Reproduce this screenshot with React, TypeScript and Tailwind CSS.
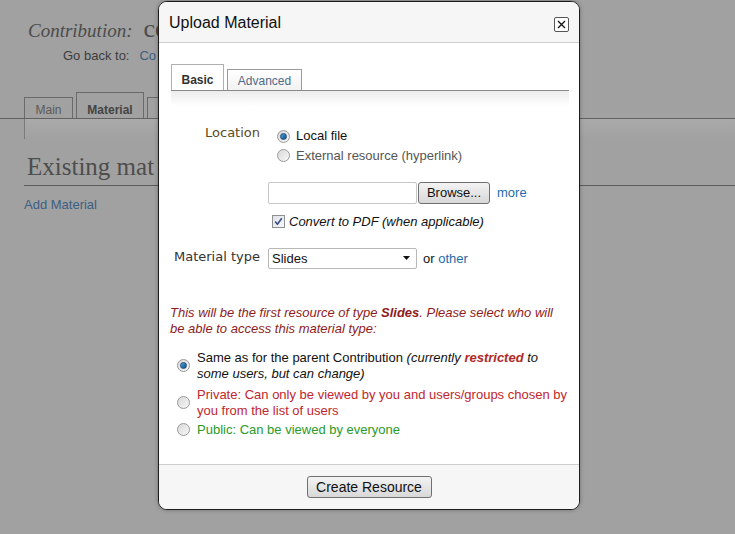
import React from "react";

const Radio = ({ checked }: { checked?: boolean }) => (
  <span className="inline-flex items-center justify-center w-[13px] h-[13px] rounded-full border border-[#9a9a9a] bg-gradient-to-br from-[#d8d8d8] to-[#f8f8f8] shrink-0">
    {checked && (
      <span className="w-[7px] h-[7px] rounded-full bg-gradient-to-br from-[#4aa6e0] to-[#0a4f8a] border border-[#1d4a78]" />
    )}
  </span>
);

export default function App() {
  return (
    <div className="relative w-[735px] h-[534px] overflow-hidden bg-[#a1a1a1] font-['Liberation_Sans',Arial,sans-serif]">
      {/* underlying page */}
      <div className="pt-[18px]">
        <div className="pl-[28px] h-[22px] flex items-baseline gap-[11px] text-[#4c4c4c] font-['Liberation_Serif',serif] leading-[22px]">
          <span className="italic text-[19px]">Contribution:</span>
          <span className="text-[26px]">co</span>
        </div>
        <div className="pl-[63px] mt-[8px] text-[13px] leading-[16px] text-[#3d3d3d] flex gap-[10px]">
          <span>Go back to:</span>
          <span className="text-[#3a5d80]">Co</span>
        </div>
        <div className="mt-[28px] pl-[24px] flex items-end gap-[3px] border-b border-[#626262] h-[27px]">
          <div className="h-[21px] w-[49px] border border-b-0 border-[#6a6a6a] flex items-end justify-center pb-[1px] text-[12px] leading-[14px] text-[#5a5a5a]">
            Main
          </div>
          <div className="h-[26px] w-[68px] border border-b-0 border-[#6a6a6a] flex items-end justify-center pb-[1px] text-[12px] leading-[14px] font-bold text-[#444]">
            Material
          </div>
          <div className="h-[21px] w-[40px] border border-b-0 border-[#6a6a6a]" />
        </div>
        <div className="ml-[24px] h-[20px] border-l border-[#7a7a7a] bg-gradient-to-b from-[#aaaaaa] to-[#a1a1a1]" />
        <div className="ml-[24px] pl-[3px] mt-[12px] pb-[2px] border-b border-[#5c5c5c] font-['Liberation_Serif',serif] text-[25px] text-[#4d4d4d] leading-[32px]">
          Existing mat
        </div>
        <div className="pl-[24px] mt-[11px] text-[13px] leading-[16px] text-[#3d5f84]">Add Material</div>
      </div>

      {/* dialog */}
      <div className="absolute left-[158px] top-[1px] w-[422px] h-[509px] border border-[#1c1c1c] rounded-[9px] bg-white overflow-hidden flex flex-col shadow-[0_0_4px_rgba(0,0,0,0.3)]">
        <div className="h-[41px] shrink-0 bg-[#f6f6f6] border-b border-[#cfcfcf] flex items-center justify-between pl-[10px] pr-[10px]">
          <span className="text-[16px] text-[#111] pt-[1px]">Upload Material</span>
          <span className="w-[15px] h-[15px] mt-[5px] border border-[#555] rounded-[2px] flex items-center justify-center bg-white">
            <svg width="9" height="9" viewBox="0 0 9 9">
              <path d="M1 1L8 8M8 1L1 8" stroke="#111" strokeWidth="1.3" />
            </svg>
          </span>
        </div>

        <div className="flex-1 pl-[12px] pr-[10px] pt-[21px]">
          {/* tabs */}
          <div className="flex items-end gap-[3px] border-b border-[#8a8a8a] h-[27px]">
            <div className="h-[26px] w-[53px] border border-b-0 border-[#b0b0b0] bg-white flex items-center justify-center text-[12px] font-bold text-[#333] pt-[4px]">
              Basic
            </div>
            <div className="h-[21px] w-[75px] border border-b-0 border-[#9a9a9a] bg-gradient-to-b from-white to-[#f2f2f2] flex items-center justify-center text-[12px] text-[#4f6a88] pt-[2px]">
              Advanced
            </div>
          </div>
          <div className="h-[15px] bg-gradient-to-b from-[#ececec] to-white" />

          {/* location */}
          <div className="mt-[19px] flex">
            <div className="w-[89px] text-right font-['DejaVu_Sans',Verdana,sans-serif] text-[13px] text-[#5b4a25] leading-[16px]">
              Location
            </div>
            <div className="ml-[17px] flex flex-col text-[13px]">
              <label className="flex items-center gap-[6px] h-[20px] pt-[2px] text-[#111]">
                <Radio checked />
                <span>Local file</span>
              </label>
              <label className="flex items-center gap-[6px] h-[21px] text-[#555]">
                <Radio />
                <span>External resource (hyperlink)</span>
              </label>
            </div>
          </div>

          {/* file */}
          <div className="mt-[16px] ml-[97px] flex items-center">
            <div className="w-[149px] h-[22px] border border-[#c6c6c6] rounded-[2px] bg-white" />
            <button className="ml-[1px] w-[72px] h-[22px] border border-[#707070] rounded-[3px] bg-gradient-to-b from-[#f3f3f3] to-[#d8d8d8] text-[13px] text-[#111] leading-[18px]">
              Browse...
            </button>
            <span className="ml-[7px] text-[13px] text-[#1d6bab]">more</span>
          </div>
          <div className="mt-[8px] ml-[101px] flex items-center gap-[4px]">
            <span className="w-[13px] h-[13px] border border-[#8e8f8f] bg-gradient-to-br from-[#dfe3ea] to-[#f6f7f9] flex items-center justify-center">
              <svg width="9" height="9" viewBox="0 0 9 9">
                <path d="M1.2 4.6L3.4 7.2L7.8 1.2" stroke="#3b4f8a" strokeWidth="1.6" fill="none" />
              </svg>
            </span>
            <span className="text-[13px] italic text-[#111]">Convert to PDF (when applicable)</span>
          </div>

          {/* material type */}
          <div className="mt-[15px] flex items-center">
            <div className="w-[89px] text-right font-['DejaVu_Sans',Verdana,sans-serif] text-[13px] text-[#333] pb-[4px]">
              Material type
            </div>
            <div className="ml-[8px] w-[149px] h-[21px] border border-[#b8b8b8] rounded-[2px] bg-white flex items-center justify-between pl-[3px] pr-[5px] text-[13px] text-[#111]">
              <span>Slides</span>
              <svg width="8" height="5" viewBox="0 0 8 5">
                <path d="M0 0H7L3.5 4Z" fill="#111" />
              </svg>
            </div>
            <span className="ml-[6px] text-[13px] text-[#111]">
              or <span className="text-[#1d6bab]">other</span>
            </span>
          </div>

          {/* warning */}
          <div className="mt-[35px] -ml-[1px] text-[13px] italic text-[#8e1c1c] leading-[16px]">
            This will be the first resource of type <b>Slides</b>. Please select who will be able to access this material type:
          </div>

          {/* access radios */}
          <div className="mt-[13px] ml-[6px] flex flex-col text-[13px] leading-[15.5px]">
            <label className="flex items-center gap-[7px]">
              <Radio checked />
              <span className="text-[#111]">
                Same as for the parent Contribution{" "}
                <i>
                  (currently <b className="text-[#b02a2a]">restricted</b> to some users, but can change)
                </i>
              </span>
            </label>
            <label className="mt-[6px] flex items-center gap-[7px]">
              <Radio />
              <span className="text-[#c2262e]">
                Private: Can only be viewed by you and users/groups chosen by you from the list of users
              </span>
            </label>
            <label className="mt-[4px] flex items-center gap-[7px]">
              <Radio />
              <span className="text-[#2a9a2a]">Public: Can be viewed by everyone</span>
            </label>
          </div>
        </div>

        <div className="h-[45px] shrink-0 bg-[#f6f6f6] border-t border-[#cfcfcf] flex items-start justify-center pt-[11px]">
          <button className="w-[125px] h-[22px] border border-[#707070] rounded-[3px] bg-gradient-to-b from-[#f3f3f3] to-[#d8d8d8] text-[14px] text-[#111] leading-[18px]">
            Create Resource
          </button>
        </div>
      </div>
    </div>
  );
}
